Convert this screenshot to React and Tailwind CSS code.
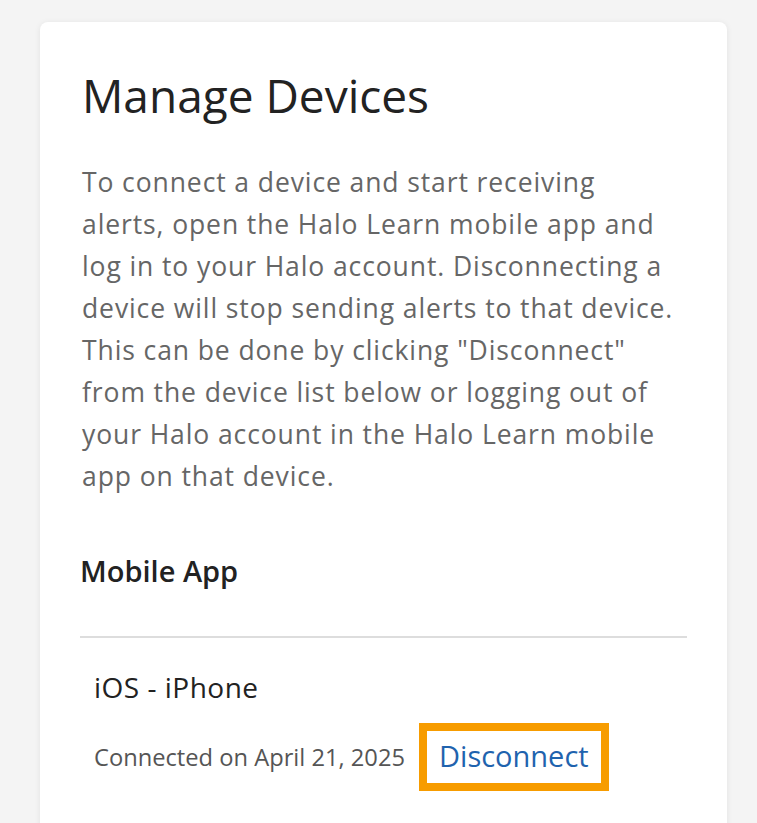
export default function App() {
  const lines = [
    "To connect a device and start receiving",
    "alerts, open the Halo Learn mobile app and",
    "log in to your Halo account. Disconnecting a",
    "device will stop sending alerts to that device.",
    'This can be done by clicking "Disconnect"',
    "from the device list below or logging out of",
    "your Halo account in the Halo Learn mobile",
    "app on that device.",
  ];
  return (
    <div className="h-[823px] overflow-hidden bg-[#f4f4f4] pt-[22px] pl-[40px]" style={{ fontFamily: '"Open Sans", sans-serif' }}>
      <div className="bg-white rounded-lg shadow-[0_1px_6px_rgba(0,0,0,0.08)] px-[40px] pt-[45px] pb-[80px] w-[687px]">
        <h1 className="pl-[2px] text-[46px] leading-[56px] font-medium text-[#222222]">Manage Devices</h1>
        <p className="mt-[38px] pl-[2px] text-[26.5px] leading-[42px] tracking-[0.9px] text-[#666666] whitespace-nowrap">
          {lines.map((l, i) => (
            <span key={i} className="block">{l}</span>
          ))}
        </p>
        <h2 className="mt-[54px] text-[29px] leading-[40px] font-semibold text-[#222222]">Mobile App</h2>
        <div className="mt-[45px] border-t-2 border-[#dddddd]" />
        <div className="pl-[14px] pt-[29px]">
          <div className="text-[28px] leading-[40px] tracking-[0.5px] text-[#222222]">iOS - iPhone</div>
          <div className="mt-[16px] flex items-center gap-[14px]">
            <span className="text-[23.7px] leading-[34px] text-[#555555]">Connected on April 21, 2025</span>
            <button className="border-[8px] border-[#f79c00] bg-white px-[12px] pt-[5px] pb-[7px] text-[29px] leading-[40px] text-[#1f63ae]">Disconnect</button>
          </div>
        </div>
      </div>
    </div>
  );
}
